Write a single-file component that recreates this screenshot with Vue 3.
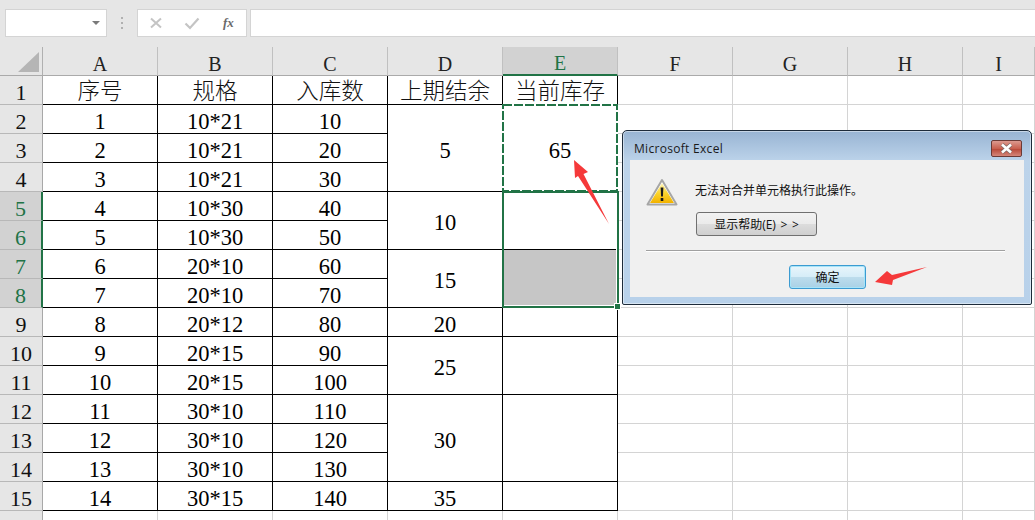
<script setup>
const columns = ['A', 'B', 'C', 'D', 'E', 'F', 'G', 'H', 'I']

const tableRows = [
  ['序号', '规格', '入库数'],
  ['1', '10*21', '10'],
  ['2', '10*21', '20'],
  ['3', '10*21', '30'],
  ['4', '10*30', '40'],
  ['5', '10*30', '50'],
  ['6', '20*10', '60'],
  ['7', '20*10', '70'],
  ['8', '20*12', '80'],
  ['9', '20*15', '90'],
  ['10', '20*15', '100'],
  ['11', '30*10', '110'],
  ['12', '30*10', '120'],
  ['13', '30*10', '130'],
  ['14', '30*15', '140'],
]

// Merged cells of columns D and E, keyed by their first sheet row
const merged = {
  1: { d: '上期结余', e: '当前库存', span: 1 },
  2: { d: '5', e: '65', span: 3 },
  5: { d: '10', e: '', span: 2 },
  7: { d: '15', e: '', span: 2, fill: true },
  9: { d: '20', e: '', span: 1 },
  10: { d: '25', e: '', span: 2 },
  12: { d: '30', e: '', span: 3 },
  15: { d: '35', e: '', span: 1 },
}

const isSelectedRow = (n) => n >= 5 && n <= 8
</script>

<template>
  <div class="app">
    <div class="toolbar">
      <div class="name-box">
        <span class="caret"></span>
      </div>
      <div class="grip"><i></i><i></i><i></i></div>
      <div class="fx-box">
        <svg class="tb-icon" width="14" height="14" viewBox="0 0 14 14">
          <path d="M2 2.500 12 11.500M12 2.500 2 11.500" stroke="#c4c4c4" stroke-width="2" fill="none" />
        </svg>
        <svg class="tb-icon" width="16" height="14" viewBox="0 0 16 14">
          <path d="M1.500 7.500 6 12 14.500 2.500" stroke="#c4c4c4" stroke-width="2.200" fill="none" />
        </svg>
        <span class="fx">fx</span>
      </div>
      <div class="formula"></div>
    </div>

    <div class="sheet">
      <div class="corner">
        <svg width="21" height="20" viewBox="0 0 21 20"><path d="M21 0V20H0Z" fill="#b5b5b5" /></svg>
      </div>
      <div v-for="c in columns" :key="c" class="col-head" :class="{ active: c === 'E' }">{{ c }}</div>

      <template v-for="n in 16" :key="n">
        <div class="row-head" :class="{ active: isSelectedRow(n) }">{{ n <= 15 ? n : '' }}</div>
        <template v-if="n <= 15">
          <div
            v-for="(v, i) in tableRows[n - 1]"
            :key="i"
            class="cell data"
            :class="{ cjk: n === 1 }"
          >{{ v }}</div>
        </template>
        <template v-else>
          <div v-for="i in 3" :key="i" class="cell"></div>
        </template>
        <template v-if="merged[n]">
          <div class="cell data" :class="{ cjk: n === 1 }" :style="{ gridRow: 'span ' + merged[n].span }">{{ merged[n].d }}</div>
          <div class="cell data" :class="{ cjk: n === 1, fill: merged[n].fill }" :style="{ gridRow: 'span ' + merged[n].span }">{{ merged[n].e }}</div>
        </template>
        <template v-if="n > 15">
          <div v-for="i in 2" :key="i" class="cell"></div>
        </template>
        <div v-for="i in 4" :key="i" class="cell"></div>
      </template>

      <svg class="ants" width="117" height="89" viewBox="0 0 117 89">
        <rect x="1" y="1" width="114" height="86" fill="none" stroke="#fff" stroke-width="2" />
        <rect x="1" y="1" width="114" height="86" fill="none" stroke="#217346" stroke-width="2" stroke-dasharray="9 2" />
      </svg>
      <div class="selection"><span class="handle"></span></div>
    </div>

    <div class="dialog">
      <div class="title-bar">
        <span class="title">Microsoft Excel</span>
        <div class="close">
          <svg width="17" height="11" viewBox="0 0 17 11">
            <path d="M4 1.500 13 9.500M13 1.500 4 9.500" stroke="#7d6a68" stroke-width="4" fill="none" />
            <path d="M4 1.500 13 9.500M13 1.500 4 9.500" stroke="#fff" stroke-width="2.600" fill="none" />
          </svg>
        </div>
      </div>
      <div class="dialog-body">
        <div class="msg-row">
          <svg class="warn" width="32" height="28" viewBox="0 0 32 28">
            <defs>
              <linearGradient id="warnFill" x1="0" y1="0" x2="0" y2="1">
                <stop offset="0" stop-color="#fff6c0" />
                <stop offset="0.5" stop-color="#fbd52e" />
                <stop offset="1" stop-color="#f2b200" />
              </linearGradient>
            </defs>
            <path d="M16 2 30.500 26.500H1.500Z" fill="#fff" stroke="#a6a6a6" stroke-width="2" stroke-linejoin="round" />
            <path d="M16 5 28 25H4Z" fill="url(#warnFill)" />
            <path d="M14.600 9.500h2.800l-.5 9h-1.800Z" fill="#1a1a1a" />
            <rect x="14.700" y="20" width="2.600" height="3" fill="#1a1a1a" />
          </svg>
          <div class="msg-col">
            <p class="msg">无法对合并单元格执行此操作。</p>
            <button class="btn help">显示帮助(E) &gt; &gt;</button>
          </div>
        </div>
        <div class="sep"></div>
        <div class="actions">
          <button class="btn ok">确定</button>
        </div>
      </div>
    </div>

    <svg class="arrows" width="1035" height="520" viewBox="0 0 1035 520">
      <path d="M574 160 588 172 583.500 174 609 224 578 176 575 178Z" fill="#f5393a" />
      <path d="M875 282 887 271 892 275 927 267 893 280 892 285Z" fill="#f5393a" />
    </svg>
  </div>
</template>

<style>
html, body { margin: 0; background: #fff; overflow: hidden; }
</style>

<style scoped>
.app {
  position: relative;
  width: 1035px;
  height: 520px;
  overflow: hidden;
  background: #fff;
  font-family: "Liberation Serif", "Noto Sans CJK SC", serif;
  color: #000;
}

/* Formula bar */
.toolbar {
  height: 47px;
  box-sizing: border-box;
  padding: 9px 0 10px 5px;
  background: #e6e6e6;
  display: flex;
  align-items: stretch;
}
.name-box, .fx-box, .formula {
  box-sizing: border-box;
  background: #fff;
  border: 1px solid #d4d4d4;
}
.name-box {
  width: 102px;
  display: flex;
  align-items: center;
  justify-content: flex-end;
  padding-right: 6px;
}
.caret {
  width: 0;
  height: 0;
  border-left: 4px solid transparent;
  border-right: 4px solid transparent;
  border-top: 4px solid #7a7a7a;
  margin-top: -1px;
}
.grip {
  width: 30px;
  display: flex;
  flex-direction: column;
  align-items: center;
  justify-content: center;
  gap: 3px;
}
.grip i {
  width: 2px;
  height: 2px;
  background: #b0b0b0;
}
.fx-box {
  width: 110px;
  display: flex;
  align-items: center;
  padding-left: 11px;
}
.tb-icon { margin-right: 21px; }
.fx-box .tb-icon + .tb-icon { margin-right: 23px; }
.fx {
  font-style: italic;
  font-weight: 700;
  font-size: 13px;
  color: #6a6a6a;
}
.formula {
  flex: 1;
  margin-left: 3px;
  border-right: none;
}

/* Sheet */
.sheet {
  position: relative;
  display: grid;
  grid-template-columns: 43px repeat(8, 115px) 72px;
  grid-auto-rows: 29px;
}
.corner {
  background: #e6e6e6;
  border-right: 1px solid #b0b0b0;
  border-bottom: 1px solid #aaa;
  display: flex;
  align-items: flex-start;
  justify-content: flex-start;
  padding: 5px 0 0 18px;
  box-sizing: border-box;
}
.col-head {
  box-sizing: border-box;
  background: #e6e6e6;
  border-right: 1px solid #c0c0c0;
  border-bottom: 1px solid #aaa;
  font-size: 20px;
  line-height: 34px;
  text-align: center;
  color: #222;
  overflow: hidden;
}
.col-head.active {
  background: #d2d2d2;
  color: #217346;
  border-bottom: 2px solid #217346;
  line-height: 33px;
}
.row-head {
  box-sizing: border-box;
  background: #e6e6e6;
  border-right: 1px solid #a8a8a8;
  border-bottom: 1px solid #b8b8b8;
  font-size: 22px;
  line-height: 33px;
  text-align: center;
  color: #111;
  overflow: hidden;
}
.row-head.active {
  background: #d2d2d2;
  color: #217346;
  border-right: 2px solid #217346;
}
.cell {
  box-sizing: border-box;
  border-right: 1px solid #d4d4d4;
  border-bottom: 1px solid #d4d4d4;
  min-width: 0;
}
.cell.data {
  border-right-color: #000;
  border-bottom-color: #000;
  font-size: 22.5px;
  line-height: 26px;
  display: flex;
  align-items: center;
  justify-content: center;
  padding-top: 5px;
}
.cell.data.cjk {
  padding-top: 3px;
  align-items: flex-start;
  font-weight: 300;
  color: #111;
}
.cell.fill { background: #c6c6c6; }

/* Selection overlays */
.ants {
  position: absolute;
  left: 502px;
  top: 57px;
}
.selection {
  position: absolute;
  left: 502px;
  top: 144px;
  width: 117px;
  height: 117px;
  box-sizing: border-box;
  border: 2px solid #217346;
  box-shadow: inset -1px -1px 0 #fff;
}
.handle {
  position: absolute;
  right: -4px;
  bottom: -4px;
  width: 5px;
  height: 5px;
  background: #217346;
  border: 1px solid #fff;
}

/* Dialog */
.dialog {
  position: absolute;
  left: 622px;
  top: 130px;
  width: 410px;
  height: 175px;
  box-sizing: border-box;
  border: 1px solid #1d2b3a;
  border-radius: 5px 5px 2px 2px;
  background: linear-gradient(180deg, #98b4d3 0, #bcd3ea 30px, #b8d1ea 100%);
  padding: 0 7px 7px;
  display: flex;
  flex-direction: column;
  font-family: "Open Sans", "Noto Sans CJK SC", sans-serif;
  box-shadow: inset 0 0 0 1px rgba(255, 255, 255, 0.45);
}
.title-bar {
  height: 29px;
  flex: none;
  display: flex;
  align-items: flex-start;
  justify-content: space-between;
}
.title {
  font-size: 12px;
  letter-spacing: 0.3px;
  line-height: 17px;
  padding: 9px 0 0 4px;
  color: #1a1a1a;
}
.close {
  width: 31px;
  height: 17px;
  box-sizing: border-box;
  margin: 9px 2px 0 0;
  border: 1px solid #6b3a36;
  border-radius: 2px;
  background: linear-gradient(180deg, #dc9a90 0, #c9604f 50%, #b94a3a 55%, #d4867a 100%);
  display: flex;
  align-items: center;
  justify-content: center;
}
.dialog-body {
  flex: 1;
  background: #f0f0f0;
  display: flex;
  flex-direction: column;
  padding: 18px 19px 0 16px;
}
.msg-row {
  display: flex;
  align-items: flex-start;
  height: 72px;
  flex: none;
}
.warn { flex: none; margin-right: 17px; }
.msg-col {
  display: flex;
  flex-direction: column;
  align-items: flex-start;
}
.msg {
  margin: 4px 0 0;
  font-size: 12px;
  line-height: 18px;
  color: #111;
}
.btn {
  box-sizing: border-box;
  font-family: inherit;
  font-size: 12px;
  padding: 0;
  color: #111;
}
.help {
  margin: 12px 0 0 1px;
  width: 121px;
  height: 24px;
  border: 1px solid #707070;
  border-radius: 3px;
  background: linear-gradient(180deg, #f2f2f2 0, #ebebeb 48%, #dcdcdc 52%, #cfcfcf 100%);
  word-spacing: 1.5px;
}
.sep {
  height: 1px;
  flex: none;
  background: #a0a0a0;
  border-bottom: 1px solid #fff;
}
.actions {
  display: flex;
  justify-content: center;
  padding: 13px 0 0 4px;
}
.ok {
  width: 77px;
  height: 24px;
  border: 1px solid #3c9bd1;
  border-radius: 3px;
  background: linear-gradient(180deg, #e8f5fb 0, #d6edf8 48%, #bcdcec 52%, #a9d1e6 100%);
  box-shadow: inset 0 0 0 1px #a8e4f8;
}

.arrows {
  position: absolute;
  left: 0;
  top: 0;
  pointer-events: none;
}
</style>
